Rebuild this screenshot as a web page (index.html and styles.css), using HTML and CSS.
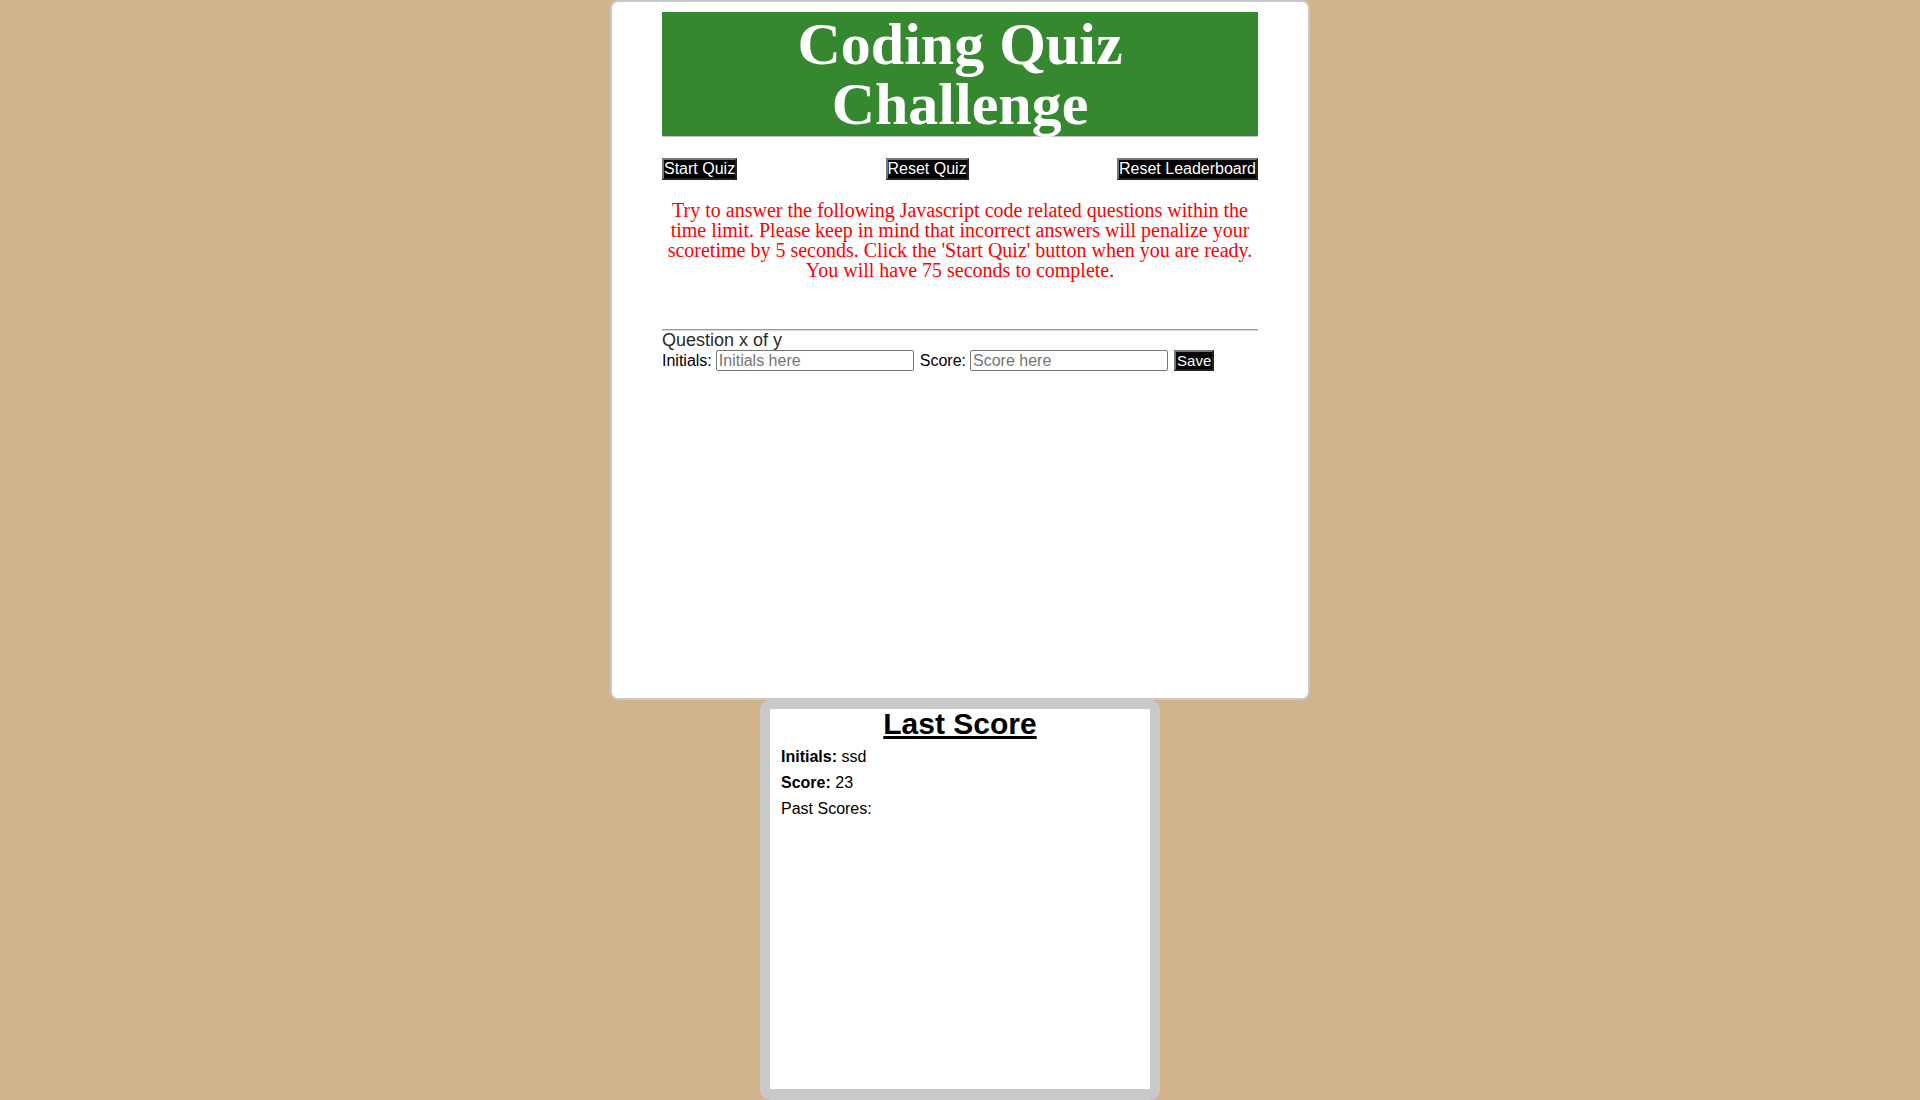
FILE: index.html
```html
<!DOCTYPE html>
<html lang="en">
<head>
<meta charset="utf-8">
<title>Coding Quiz Challenge</title>
<link rel="stylesheet" href="styles.css">
</head>
<body>
<main class="quiz-card">
  <header class="quiz-header">
    <h1 class="quiz-title">Coding Quiz Challenge</h1>
  </header>
  <nav class="controls">
    <button class="btn" type="button">Start Quiz</button>
    <button class="btn" type="button">Reset Quiz</button>
    <button class="btn" type="button">Reset Leaderboard</button>
  </nav>
  <p class="instructions">Try to answer the following Javascript code related questions within the time limit. Please keep in mind that incorrect answers will penalize your scoretime by 5 seconds. Click the 'Start Quiz' button when you are ready. You will have 75 seconds to complete.</p>
  <hr class="divider">
  <div class="question-count">Question x of y</div>
  <form class="save-row">
    <label class="field-label" for="initials">Initials:</label>
    <input class="field-input" id="initials" type="text" placeholder="Initials here">
    <label class="field-label score-label" for="score">Score:</label>
    <input class="field-input" id="score" type="text" placeholder="Score here">
    <button class="btn btn-save" type="button">Save</button>
  </form>
</main>
<aside class="score-card">
  <div class="score-inner">
    <h2 class="score-title">Last Score</h2>
    <div class="score-line"><strong>Initials:</strong> ssd</div>
    <div class="score-line"><strong>Score:</strong> 23</div>
    <div class="score-line">Past Scores:</div>
  </div>
</aside>
</body>
</html>
```
FILE: styles.css
```css
html, body {
  margin: 0;
  padding: 0;
}
body {
  background: #d2b48c;
  font-family: "Liberation Sans", Arial, sans-serif;
  color: #000;
}
.quiz-card {
  box-sizing: border-box;
  width: 700px;
  height: 700px;
  margin: 0 auto;
  padding: 10px 50px;
  background: #fff;
  border: 2px solid #c8c8c8;
  border-radius: 8px;
}
.quiz-header {
  background: #368830;
  border-bottom: 1px solid #c0c0c0;
  padding: 2px 0 2px;
}
.quiz-title {
  margin: 0;
  font-family: "Liberation Serif", "Times New Roman", serif;
  font-weight: bold;
  font-size: 60px;
  line-height: 60px;
  color: #fff;
  text-align: center;
}
.controls {
  display: flex;
  justify-content: space-between;
  margin-top: 21px;
}
.btn {
  font-family: "Liberation Sans", Arial, sans-serif;
  font-size: 16px;
  line-height: normal;
  color: #fff;
  background: #000;
  border: 2px outset #767676;
  padding: 0;
  margin: 0;
  border-radius: 0;
}
.instructions {
  margin: 20px 0 0;
  font-family: "Liberation Serif", "Times New Roman", serif;
  font-size: 20px;
  line-height: 20px;
  color: #ff0000;
  text-align: center;
}
.divider {
  margin: 49px 0 0;
  border: 0;
  border-top: 1px solid #9a9a9a;
  border-bottom: 1px solid #d8d8d8;
  height: 0;
}
.question-count {
  font-size: 18px;
  line-height: 18px;
  color: #2a2a2a;
}
.save-row {
  display: flex;
  align-items: center;
  margin: 1px 0 0;
}
.field-label {
  font-size: 16px;
  margin-right: 4px;
}
.score-label {
  margin-left: 6px;
}
.field-input {
  box-sizing: border-box;
  width: 198px;
  height: 21px;
  font-family: "Liberation Sans", Arial, sans-serif;
  font-size: 16px;
  padding: 0 2px;
  border: 1px solid #767676;
  border-radius: 2px;
  margin: 0;
}
.field-input::placeholder {
  color: #757575;
}
.btn-save {
  font-size: 15px;
  margin-left: 6px;
  padding: 0 1px;
  height: 21px;
}
.score-card {
  box-sizing: border-box;
  width: 400px;
  height: 400px;
  margin: 0 auto;
  border: 10px solid #c9c9c9;
  border-radius: 10px;
  background: #c9c9c9;
}
.score-inner {
  box-sizing: border-box;
  height: 100%;
  background: #fff;
  padding: 0 11px;
}
.score-title {
  margin: -1px 0 5px;
  font-size: 30px;
  font-weight: bold;
  text-decoration: underline;
  text-align: center;
  line-height: 30px;
}
.score-line {
  font-size: 16px;
  line-height: 26px;
}
```
